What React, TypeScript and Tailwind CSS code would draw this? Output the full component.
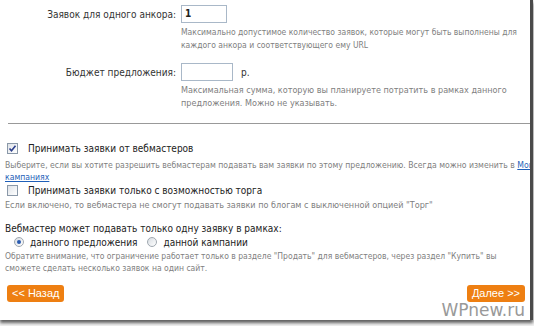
import React from "react";

const font = { fontFamily: "'DejaVu Sans Condensed', 'DejaVu Sans', sans-serif" };
const arial = { fontFamily: "'Liberation Sans', Arial, sans-serif" };

function Field({ label, width, suffix, value, help, className, helpSize }: { label: string; width: string; suffix?: string; value?: string; help: string[]; className?: string; helpSize: string }) {
    return (
        <div className={`flex ${className ?? ""}`}>
            <div className="w-[181px] shrink-0 pr-[5px] h-[18px] flex items-center justify-end text-[10px] text-[#333]">{label}</div>
            <div className="flex flex-col">
                <div className="flex items-center gap-[8px]">
                    <div className={`${width} h-[18px] border border-[#a9b8c8] bg-white text-[10px] font-bold leading-[16px] px-[3px] text-[#222]`}>{value}</div>
                    {suffix && <span className="text-[10px] text-[#333]">{suffix}</span>}
                </div>
                <div className={`mt-[3px] ${helpSize} leading-[13px] text-[#808080] whitespace-nowrap`}>
                    {help.map((h) => (
                        <div key={h}>{h}</div>
                    ))}
                </div>
            </div>
        </div>
    );
}

function Checkbox({ checked }: { checked?: boolean }) {
    return (
        <div className="w-[11px] h-[11px] border border-[#8a98a8] bg-gradient-to-br from-[#dfe3e8] to-white flex items-center justify-center">
            {checked && (
                <svg width="9" height="9" viewBox="0 0 9 9">
                    <path d="M1.5 4.5 L3.5 6.8 L7.5 1.8" fill="none" stroke="#2c3e8c" strokeWidth="1.6" />
                </svg>
            )}
        </div>
    );
}

function Radio({ checked }: { checked?: boolean }) {
    return (
        <div className="w-[10px] h-[10px] rounded-full border border-[#a0a8b0] bg-gradient-to-br from-[#d8dde2] to-white flex items-center justify-center">
            {checked && <div className="w-[4px] h-[4px] rounded-full bg-[#2a5bb0]" />}
        </div>
    );
}

export default function App() {
    return (
        <div className="w-[534px] h-[326px] bg-[#f2f2f2] overflow-hidden" style={font}>
            <div className="w-[533px] h-[320px] bg-white border-r-[3px] border-[#4a4a4a] shadow-[0px_3px_3px_rgba(0,0,0,0.6)] overflow-hidden flex flex-col">
                <Field
                    className="mt-[5px]"
                    helpSize="text-[8.5px]"
                    label="Заявок для одного анкора:"
                    width="w-[46px]"
                    value="1"
                    help={["Максимально допустимое количество заявок, которые могут быть выполнены для", "каждого анкора и соответствующего ему URL"]}
                />
                <Field
                    className="mt-[11px]"
                    helpSize="text-[9px]"
                    label="Бюджет предложения:"
                    width="w-[52px]"
                    suffix="р."
                    help={["Максимальная сумма, которую вы планируете потратить в рамках данного", "предложения. Можно не указывать."]}
                />
                <div className="ml-[8px] mt-[13px] border-t border-[#999]" />
                <div className="px-[5px] mt-[17px]">
                    <div className="flex items-center h-[14px] gap-[10px] pl-[2px]">
                        <Checkbox checked />
                        <span className="text-[10px] text-[#222]">Принимать заявки от вебмастеров</span>
                    </div>
                    <div className="mt-[4px] text-[8.6px] leading-[12px] text-[#808080] whitespace-nowrap">
                        Выберите, если вы хотите разрешить вебмастерам подавать вам заявки по этому предложению. Всегда можно изменить в <span className="text-[#1f5fb8] underline">Мои</span>
                    </div>
                    <div className="text-[8.6px] leading-[12px] text-[#1f5fb8] underline">кампаниях</div>
                    <div className="flex items-center h-[14px] gap-[10px] pl-[2px]">
                        <Checkbox />
                        <span className="text-[10px] text-[#222]">Принимать заявки только с возможностью торга</span>
                    </div>
                    <div className="mt-[2px] text-[9px] leading-[12px] text-[#808080]">
                        Если включено, то вебмастера не смогут подавать заявки по блогам с выключенной опцией "Торг"
                    </div>
                    <div className="mt-[11px] text-[10px] leading-[14px] text-[#222]">Вебмастер может подавать только одну заявку в рамках:</div>
                    <div className="flex items-center h-[12px] pl-[9px] text-[10px] text-[#222]">
                        <Radio checked />
                        <span className="ml-[6px]">данного предложения</span>
                        <span className="ml-[10px]"><Radio /></span>
                        <span className="ml-[6px]">данной кампании</span>
                    </div>
                    <div className="mt-[2px] text-[8.5px] leading-[12px] text-[#808080] whitespace-nowrap">
                        <div>Обратите внимание, что ограничение работает только в разделе "Продать" для вебмастеров, через раздел "Купить" вы</div>
                        <div>сможете сделать несколько заявок на один сайт.</div>
                    </div>
                    <div className="flex justify-between items-start mt-[11px] pl-[2px]">
                        <div className="h-[17px] px-[5px] rounded-[3px] bg-[#ee7f12] text-white text-[11px] leading-[17px]" style={arial}>&lt;&lt; Назад</div>
                        <div className="flex flex-col items-end">
                            <div className="h-[17px] px-[5px] rounded-[3px] bg-[#ee7f12] text-white text-[11px] leading-[17px]" style={arial}>Далее &gt;&gt;</div>
                            <div className="mt-[1px] text-[17px] leading-[15px] text-[#999]" style={{ fontFamily: "'DejaVu Sans', sans-serif" }}>WPnew.ru</div>
                        </div>
                    </div>
                </div>
            </div>
        </div>
    );
}
